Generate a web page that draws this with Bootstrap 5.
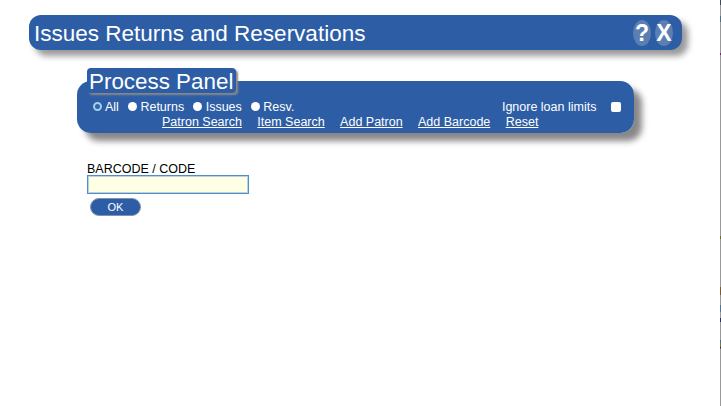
<!DOCTYPE html>
<html lang="en">
<head>
<meta charset="utf-8">
<link rel="stylesheet" href="https://cdn.jsdelivr.net/npm/bootstrap@5.3.0/dist/css/bootstrap.min.css">
<style>
html,body{height:100%;}
body{font-family:"Liberation Sans",Arial,sans-serif;font-size:12.5px;line-height:15px;color:#000;padding:15px 0 0 29px;overflow:hidden;
background:#fff linear-gradient(to bottom,#3d4a55 0,#3d4a55 5px,#999 5px,#999 16px,#4d6f80 16px,#4d6f80 22px,#999 22px,#999 53px,#7a1f78 53px,#7a1f78 55px,#999 55px,#999 236px,#6b6f22 236px,#6b6f22 239px,#999 239px,#999 287px,#7a5a30 287px,#7a5a30 295px,#999 295px,#999 305px,#4f7590 305px,#4f7590 312px,#999 312px,#999 318px,#2a3060 318px,#2a3060 322px,#999 322px,#999 340px,#3f6a8a 340px,#8a7a40 346px,#202030 348px,#999 349px,#999 100%) right top/1px 100% no-repeat;}
.title-bar{width:653px;height:35px;background:#2d5ea5;border-radius:12px;box-shadow:6px 6px 6px #999;color:#fff;padding:0 5px;}
.title-text{font-size:22.5px;line-height:35px;padding-top:2px;}
.round-btn{width:18px;height:26px;border-radius:50%;background:#5b7fb3;font-weight:700;font-size:23px;line-height:26px;text-align:center;color:#fff;}
.panel-set{width:557px;margin:18px 0 0 48px;background:#2d5ea5;border:0;border-radius:14px;box-shadow:8px 8px 6px #888;color:#fff;padding:0 13px 0 15px;height:65px;}
.panel-set legend{float:none;width:auto;height:25px;margin:0 0 0 -5px;padding:0 3px 0 2px;font-size:22.4px;line-height:27px;background:#2d5ea5;border-radius:4px;box-shadow:2px 2px 2px #888;}
.panel-set input{appearance:none;margin:0;width:10px;height:10px;background:#fff;border:0;}
.panel-set input[type=radio]{border-radius:50%;width:9px;height:9px;margin:-1px .5px 0;}
.panel-set input[type=checkbox]{border-radius:2px;}
.panel-set input[type=radio]:checked{border:2px solid #a9cdee;background:#2f66ad;}
.opt-row{height:15px;margin-top:6px;}
.opt-row span{padding-top:2px;}
.opt-label{margin:0 8.5px 0 3px;}
.limit-label{margin:0 14.6px 0 auto;}
.links-row{padding:1px 0 0 70px;gap:15.4px;}
.links-row a{color:#fff;}
.code-area{margin:28px 0 0 58px;}
.code-label{height:14px;line-height:16px;}
.code-input{display:block;width:162px;height:19px;background:#ffffe6;border:1px solid #4f8fd0;box-shadow:inset 0 0 0 1px rgba(79,143,208,.4);padding:0;outline:0;}
.ok-btn{display:block;width:51px;height:18px;margin:4px 0 0 3px;padding:0;border-radius:9px;background:#2d5ea5;color:#fff;border:1px solid #7f93b3;font-size:11px;line-height:14px;}
</style>
</head>
<body>
<div class="title-bar d-flex align-items-center justify-content-between">
  <div class="title-text">Issues Returns and Reservations</div>
  <div class="d-flex gap-1 me-1"><div class="round-btn">?</div><div class="round-btn">X</div></div>
</div>
<fieldset class="panel-set">
  <legend>Process Panel</legend>
  <div class="opt-row d-flex align-items-center">
    <input type="radio" name="pm" checked><span class="opt-label">All</span>
    <input type="radio" name="pm"><span class="opt-label">Returns</span>
    <input type="radio" name="pm"><span class="opt-label">Issues</span>
    <input type="radio" name="pm"><span class="opt-label">Resv.</span>
    <span class="limit-label">Ignore loan limits</span>
    <input type="checkbox">
  </div>
  <div class="links-row d-flex">
    <a href="#">Patron Search</a><a href="#">Item Search</a><a href="#">Add Patron</a><a href="#">Add Barcode</a><a href="#">Reset</a>
  </div>
</fieldset>
<div class="code-area">
  <div class="code-label">BARCODE / CODE</div>
  <input class="code-input" type="text">
  <button class="ok-btn" type="button">OK</button>
</div>
<script src="https://cdn.jsdelivr.net/npm/bootstrap@5.3.0/dist/js/bootstrap.bundle.min.js"></script>
</body>
</html>
